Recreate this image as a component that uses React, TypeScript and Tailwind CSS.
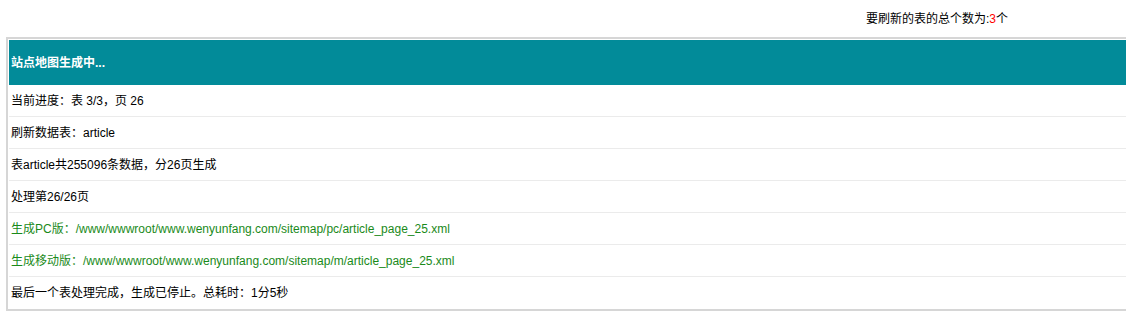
import React from 'react';

type Row = { label: string; tone?: 'green' };

const rows: Row[] = [
  { label: '当前进度：表 3/3，页 26' },
  { label: '刷新数据表：article' },
  { label: '表article共255096条数据，分26页生成' },
  { label: '处理第26/26页' },
  { label: '生成PC版：/www/wwwroot/www.wenyunfang.com/sitemap/pc/article_page_25.xml', tone: 'green' },
  { label: '生成移动版：/www/wwwroot/www.wenyunfang.com/sitemap/m/article_page_25.xml', tone: 'green' },
  { label: '最后一个表处理完成，生成已停止。总耗时：1分5秒' },
];

const App = () => {
  return (
    <div className="w-[1126px] h-[311px] bg-white text-[12px] text-black overflow-hidden font-['Liberation_Sans','Noto_Sans_CJK_SC',sans-serif]">
      <div className="h-[37px] flex items-center pl-[866px]">
        <span>
          要刷新的表的总个数为:<span className="text-[#ff0000]">3</span>个
        </span>
      </div>
      <div className="ml-[6px] w-[1140px] border-t-2 border-l-2 border-b-2 border-[#d6d6d6] pt-px pl-px">
        <div className="h-[45px] bg-[#028b99] flex items-center pl-[2px] text-white font-bold">
          站点地图生成中...
        </div>
        {rows.map((r, i) => (
          <div
            key={i}
            className={`h-[32px] flex items-center pl-[2px] ${i < rows.length - 1 ? 'border-b border-[#ebebeb]' : ''} ${r.tone === 'green' ? 'text-[#1a8a1a]' : ''}`}
          >
            {r.label}
          </div>
        ))}
      </div>
    </div>
  );
};

export default App;
